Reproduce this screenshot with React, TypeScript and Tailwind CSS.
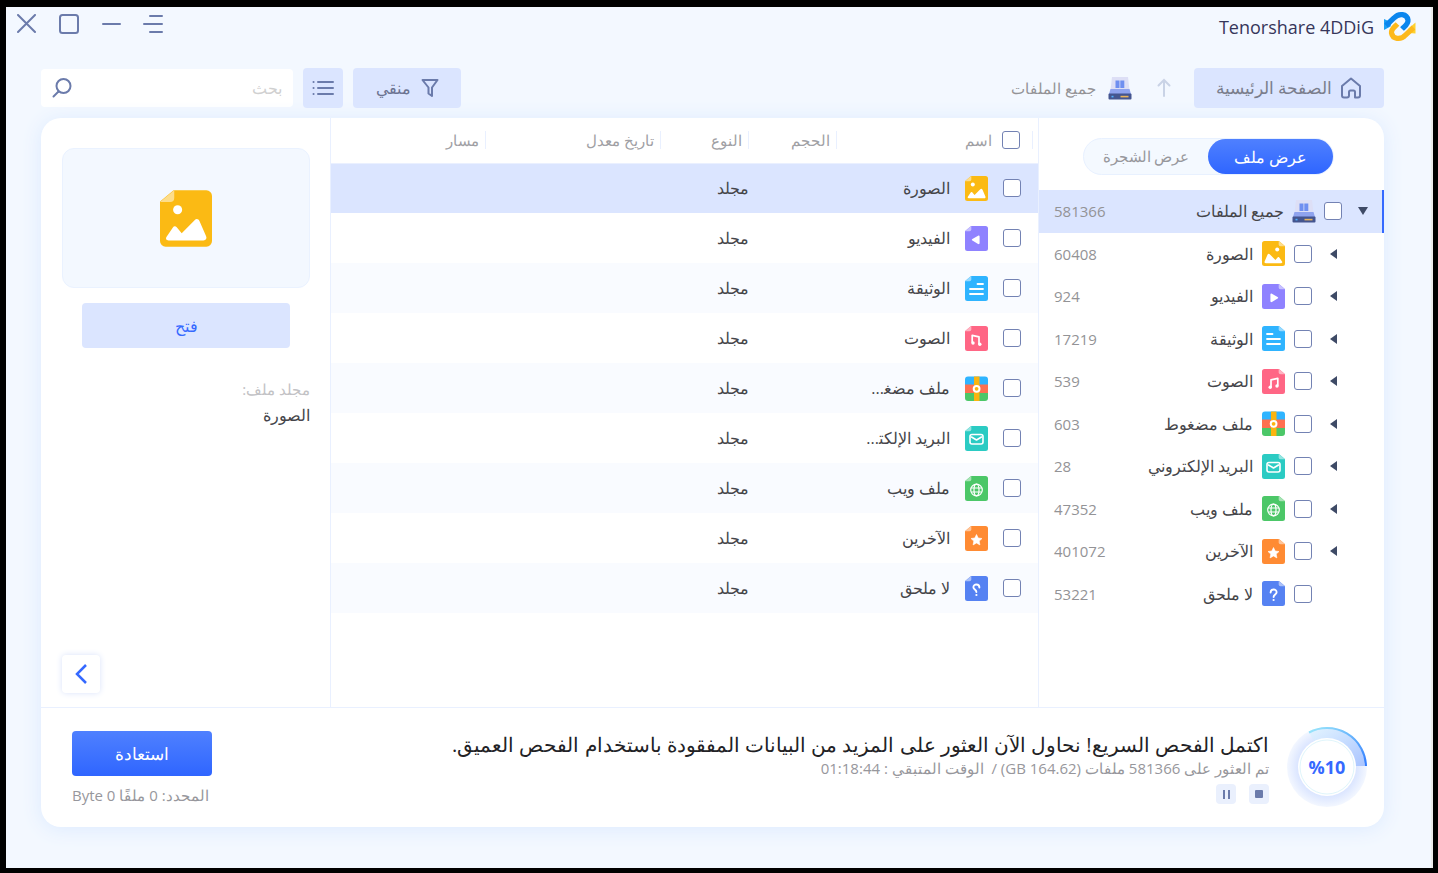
import { useState, type ReactNode } from "react";

type FileKind = "image" | "video" | "document" | "audio" | "archive" | "email" | "web" | "other" | "unknown";

type Category = {
    kind: FileKind;
    name: string;
    shortName: string;
    count: number;
    expandable: boolean;
};

const categories: Category[] = [
    { kind: "image", name: "الصورة", shortName: "الصورة", count: 60408, expandable: true },
    { kind: "video", name: "الفيديو", shortName: "الفيديو", count: 924, expandable: true },
    { kind: "document", name: "الوثيقة", shortName: "الوثيقة", count: 17219, expandable: true },
    { kind: "audio", name: "الصوت", shortName: "الصوت", count: 539, expandable: true },
    { kind: "archive", name: "ملف مضغوط", shortName: "ملف مضغ\u200d...", count: 603, expandable: true },
    { kind: "email", name: "البريد الإلكتروني", shortName: "البريد الإلكت\u200d...", count: 28, expandable: true },
    { kind: "web", name: "ملف ويب", shortName: "ملف ويب", count: 47352, expandable: true },
    { kind: "other", name: "الآخرين", shortName: "الآخرين", count: 401072, expandable: true },
    { kind: "unknown", name: "لا ملحق", shortName: "لا ملحق", count: 53221, expandable: false },
];

const columns = ["الحجم", "النوع", "تاريخ معدل", "مسار"];

const fileColors: Record<FileKind, string> = {
    image: "#fbba14",
    video: "#8f82ff",
    document: "#2fb4ff",
    audio: "#ff6685",
    archive: "#ff7050",
    email: "#2bcbc3",
    web: "#4cc768",
    other: "#ff8b33",
    unknown: "#5682f2",
};

const fileGlyphs: Record<FileKind, ReactNode> = {
    image: (
        <>
            <circle cx="15.2" cy="8.6" r="2" fill="#fff" />
            <path d="M3.8 22.2c-1.200 0-1.600-.9-1.200-1.800l2.900-6.700c.5-1.100 1.500-1.200 2.200-.4l5.700 5.700 2.200-2.600c.5-.6 1.300-.6 1.700.1l2.700 4c.7 1 .2 1.700-.8 1.700z" fill="#fff" />
        </>
    ),
    video: <path d="M8.4 10.6c0-1 .7-1.3 1.5-.9l5.700 3.300c.8.5.8 1.200 0 1.600l-5.700 3.400c-.8.400-1.500 0-1.500-.9z" fill="#fff" />,
    document: <path d="M5 8h5.500M5 13h13M5 18h13" stroke="#fff" strokeWidth="1.8" strokeLinecap="round" />,
    audio: (
        <>
            <path d="M9 18v-7.200l6.800-1.500v7.400" fill="none" stroke="#fff" strokeWidth="1.7" strokeLinejoin="round" />
            <circle cx="8.2" cy="18.2" r="1.7" fill="#fff" />
            <circle cx="15" cy="17" r="1.7" fill="#fff" />
        </>
    ),
    archive: null,
    email: (
        <>
            <rect x="5" y="8.5" width="13" height="9.5" rx="2" fill="none" stroke="#fff" strokeWidth="1.6" />
            <path d="M6.500 11l5 3 5-3" fill="none" stroke="#fff" strokeWidth="1.6" strokeLinecap="round" strokeLinejoin="round" />
        </>
    ),
    web: (
        <g fill="none" stroke="#fff" strokeWidth="1.2">
            <circle cx="11.5" cy="14" r="5.8" />
            <ellipse cx="11.5" cy="14" rx="2.5" ry="5.8" />
            <path d="M6.200 12h10.600M6.200 16h10.600" />
        </g>
    ),
    other: <path d="M11.500 8.500l1.700 3.500 3.800.5-2.800 2.600.7 3.800-3.400-1.900-3.400 1.900.7-3.800L6 12.500l3.800-.5z" fill="#fff" stroke="#fff" strokeWidth=".6" strokeLinejoin="round" />,
    unknown: (
        <>
            <path d="M8.600 11.500c0-4 6-4 6-.3 0 2.300-3 2.300-3 4.800" fill="none" stroke="#fff" strokeWidth="1.9" strokeLinecap="round" />
            <circle cx="11.6" cy="19" r="1.1" fill="#fff" />
        </>
    ),
};

// The page fold sits top right, flipped icons have it top left
const FileIcon = ({ kind, className }: { kind: FileKind; className: string }) => (
    <svg viewBox="0 0 23 25" className={className} aria-hidden="true">
        {kind === "archive" ? (
            <>
                <path d="M0 9V3.500A3 3 0 0 1 3 .5h17a3 3 0 0 1 3 3V9z" fill="#2fb4ff" />
                <path d="M0 8.500h23v8.500H0z" fill="#ff7050" />
                <path d="M0 17h23v5a3 3 0 0 1-3 3H3a3 3 0 0 1-3-3z" fill="#4cc768" />
                <path d="M9 .5h5.500V25H9z" fill="#fbb40f" />
                <circle cx="11.6" cy="12.8" r="2.9" fill="#fbb40f" stroke="#fff" strokeWidth="2" />
            </>
        ) : (
            <>
                <path d="M2.500 0H17l6 5v17.500a2.500 2.500 0 0 1-2.500 2.500h-18A2.500 2.500 0 0 1 0 22.500v-20A2.500 2.500 0 0 1 2.500 0z" fill={fileColors[kind]} />
                <path d="M16.700 0l6.300 5.200h-4.500a1.800 1.800 0 0 1-1.800-1.800z" fill="#fff" fillOpacity=".5" />
                {fileGlyphs[kind]}
            </>
        )}
    </svg>
);

const DriveIcon = () => (
    <svg viewBox="0 0 24 23" className="h-[23px] w-6 shrink-0" aria-hidden="true">
        <path d="M4 0h16l1.500 13h-19z" fill="#dddff6" />
        <path d="M7.500 3.500h4v7.500h-4zM12.300 3.500h4v7.500h-4z" fill="#6f8ff0" />
        <path d="M2.500 12h19l1.500 5H1z" fill="#8fa3ee" />
        <rect x="0.5" y="16.5" width="23" height="6" rx="1" fill="#44558f" />
        <path d="M3.500 19.600h2" stroke="#4fb0ff" strokeWidth="1.6" />
        <path d="M12.500 19.600h8" stroke="#e8b45c" strokeWidth="1.6" />
    </svg>
);

const Logo = () => (
    <svg viewBox="0 0 32 31" className="h-[31px] w-8" fill="none" strokeWidth="5.2" aria-hidden="true">
        <path d="M31.500 11.500v11l-6.500-.5-1-4z" fill="#ffd230" />
        <path d="M29.500 16.500l-8 7.500c-5 5.500-13 4-14-2-.5-4 3-6 6-9" stroke="#fdb91c" />
        <path d="M0 8v11l6.500-3.500 1-4z" fill="#1da1f5" />
        <path d="M2 14.500l8-7.500c5-5.500 13-4 14 2 .5 4-3 6-6 9" stroke="#0a86ee" />
    </svg>
);

const Checkbox = ({ id, label }: { id: string; label?: string }) => (
    <input
        id={id}
        type="checkbox"
        aria-label={label}
        className="h-[18px] w-[18px] shrink-0 appearance-none rounded-[3px] border border-[#7382b3] bg-white checked:bg-[#3569ff]"
    />
);

const TitleBar = () => (
    <header className="flex h-[37px] items-center justify-between pt-0.5 pr-[15px] pl-[11px] text-[#6b7bab]">
        <div className="flex items-center gap-2.5">
            <Logo />
            <span dir="ltr" className="text-lg text-[#36365a]">Tenorshare 4DDiG</span>
        </div>
        <div className="flex items-center gap-[22px] pb-1.5">
            <button aria-label="القائمة">
                <svg viewBox="0 0 20 20" className="h-5 w-5" stroke="currentColor" strokeWidth="2" strokeLinecap="round">
                    <path d="M7 2h12M1 10h18M7 18h12" />
                </svg>
            </button>
            <button aria-label="تصغير">
                <svg viewBox="0 0 20 20" className="h-5 w-5" stroke="currentColor" strokeWidth="2" strokeLinecap="round">
                    <path d="M2 10h17" />
                </svg>
            </button>
            <button aria-label="تكبير">
                <svg viewBox="0 0 20 20" className="h-5 w-5" fill="none" stroke="currentColor" strokeWidth="2">
                    <rect x="1" y="1" width="18" height="18" rx="2.5" />
                </svg>
            </button>
            <button aria-label="إغلاق">
                <svg viewBox="0 0 20 20" className="h-5 w-5" stroke="currentColor" strokeWidth="2" strokeLinecap="round">
                    <path d="M1 1l17 17M18 1L1 18" />
                </svg>
            </button>
        </div>
    </header>
);

const Toolbar = () => (
    <div className="flex h-10 items-center justify-between">
        <nav className="flex h-full items-center">
            <button className="flex h-full w-[190px] items-center justify-center gap-2 rounded bg-[#dbe5ff] text-[17px] text-[#7a7d8c]">
                <svg viewBox="0 0 22 22" className="h-[22px] w-[22px]" fill="none" stroke="#6b7bab" strokeWidth="2" strokeLinejoin="round" aria-hidden="true">
                    <path d="M2 9l9-7.500L20 9v9.500a2 2 0 0 1-2 2h-3V15a1.500 1.500 0 0 0-1.500-1.500h-3A1.500 1.500 0 0 0 9 15v3.500a2 2 0 0 1-2 2H4a2 2 0 0 1-2-2z" />
                </svg>
                الصفحة الرئيسية
            </button>
            <button aria-label="أعلى" className="mr-5 ml-[22px]">
                <svg viewBox="0 0 20 20" className="h-5 w-5" fill="none" stroke="#c9d3e6" strokeWidth="2" strokeLinecap="round" aria-hidden="true">
                    <path d="M10 18V2M4.500 7.500L10 2l5.500 5.500" />
                </svg>
            </button>
            <a href="#all" className="flex items-center gap-3 text-[15px] text-[#939396]">
                <DriveIcon />
                جميع الملفات
            </a>
        </nav>
        <div className="flex h-full items-center gap-2.5">
            <button className="flex h-full w-[108px] items-center justify-center gap-2.5 rounded bg-[#dbe5ff] text-[#6b7391]">
                <svg viewBox="0 0 18 20" className="h-5 w-[18px]" fill="none" stroke="#6b7bab" strokeWidth="2" strokeLinejoin="round" aria-hidden="true">
                    <path d="M1.500 2h15L11 9.500v8.500l-3.500-2.500v-6z" />
                </svg>
                منقي
            </button>
            <button aria-label="عرض القائمة" className="flex h-full w-10 items-center justify-center rounded bg-[#dbe5ff]">
                <svg viewBox="0 0 22 18" className="h-[18px] w-[22px]" stroke="#6b7bab" strokeWidth="2" strokeLinecap="round" aria-hidden="true">
                    <path d="M6 3h15M6 9h15M6 15h15M1.500 3h.1M1.500 9h.1M1.500 15h.1" />
                </svg>
            </button>
            <label className="flex h-[38px] w-[252px] items-center rounded bg-white px-[11px]">
                <input type="text" placeholder="بحث" aria-label="بحث" className="min-w-0 flex-1 bg-transparent outline-none placeholder:text-[#d0d0d0]" />
                <svg viewBox="0 0 20 20" className="h-5 w-5" fill="none" stroke="#6b7bab" strokeWidth="2" strokeLinecap="round" aria-hidden="true">
                    <circle cx="11.5" cy="8" r="7" />
                    <path d="M6.500 13.500L1.500 18.500" />
                </svg>
            </label>
        </div>
    </div>
);

const Tree = () => {
    const [view, setView] = useState<"file" | "tree">("file");
    const active = "bg-linear-to-b from-[#4f80ff] to-[#2f65ff] text-white";
    const idle = "text-[#97979c]";

    return (
        <aside className="w-[346px] shrink-0 border-l border-[#e9f0ff]">
            <div className="mt-5 mr-[50px] mb-[15px] flex h-[37px] w-[251px] items-center rounded-full border border-[#e8f1ff] bg-[#f4f9ff]">
                <button onClick={() => setView("file")} className={`h-full w-[125px] rounded-full ${view === "file" ? active : idle}`}>عرض ملف</button>
                <button onClick={() => setView("tree")} className={`h-full flex-1 rounded-full text-[15px] ${view === "tree" ? active : idle}`}>عرض الشجرة</button>
            </div>
            <ul className="grid h-[425px] auto-rows-fr">
                <li className="flex items-center border-r-2 border-[#3569ff] bg-[#dbe5ff] pr-3.5 pl-[15px]">
                    <button aria-label="طي" className="ml-4">
                        <svg viewBox="0 0 10 8" className="h-2 w-2.5" fill="#3e4a66"><path d="M0 0h10L5 8z" /></svg>
                    </button>
                    <Checkbox id="tree-all" />
                    <label htmlFor="tree-all" className="flex flex-1 items-center gap-2 pr-2 text-[#454549]">
                        <DriveIcon />
                        جميع الملفات
                    </label>
                    <span className="text-[15px] text-[#939396]">581366</span>
                </li>
                {categories.map((category) => (
                    <li key={category.kind} className="flex items-center pr-[43px] pl-[15px]">
                        <span className="flex w-[29px] items-center pr-1">
                            {category.expandable && (
                                <button aria-label="توسيع">
                                    <svg viewBox="0 0 7 10" className="h-2.5 w-[7px]" fill="#3e4a66"><path d="M7 0v10L0 5z" /></svg>
                                </button>
                            )}
                        </span>
                        <Checkbox id={`tree-${category.kind}`} />
                        <label htmlFor={`tree-${category.kind}`} className="mr-[9px] flex flex-1 items-center gap-[9px] text-[#454549]">
                            <FileIcon kind={category.kind} className="h-[25px] w-[23px] shrink-0" />
                            {category.name}
                        </label>
                        <span className="text-[15px] text-[#939396]">{category.count}</span>
                    </li>
                ))}
            </ul>
        </aside>
    );
};

const FileTable = () => (
    <section className="min-w-0 flex-1">
        <table className="w-full table-fixed text-right">
            <thead className="h-[45px] border-b border-[#eaf0ff] text-[15px] text-[#a0a0a4]">
                <tr>
                    <th className="w-[201px] pr-[5px] font-normal">
                        <div className="flex h-[18px] items-center gap-2.5 border-r border-[#e9f0ff] pr-3">
                            <Checkbox id="table-all" />
                            <label htmlFor="table-all">اسم</label>
                        </div>
                    </th>
                    {columns.map((column, index) => (
                        <th key={column} className={`font-normal ${index < 2 ? "w-[88px]" : index === 2 ? "w-[175px]" : ""}`}>
                            <div className="flex h-[18px] items-center border-r border-[#e9f0ff] pr-1.5">{column}</div>
                        </th>
                    ))}
                </tr>
            </thead>
            <tbody className="text-[#454549]">
                {categories.map((category, index) => (
                    <tr key={category.kind} className={`h-[50px] ${index === 0 ? "bg-[#dbe5ff]" : index % 2 === 0 ? "bg-[#f9fbff]" : "bg-white"}`}>
                        <td className="pr-[17px]">
                            <div className="flex items-center">
                                <Checkbox id={`table-${category.kind}`} />
                                <label htmlFor={`table-${category.kind}`} className="mr-[15px] flex items-center gap-[15px] whitespace-nowrap">
                                    <FileIcon kind={category.kind} className={`h-[25px] w-[23px] shrink-0 ${category.kind === "archive" ? "" : "-scale-x-100"}`} />
                                    {category.shortName}
                                </label>
                            </div>
                        </td>
                        <td></td>
                        <td>مجلد</td>
                        <td></td>
                        <td></td>
                    </tr>
                ))}
            </tbody>
        </table>
    </section>
);

const Preview = () => (
    <aside className="flex w-[290px] shrink-0 flex-col border-r border-[#e9f0ff] pt-[30px] pr-5 pb-3.5 pl-[21px]">
        <div className="flex h-[140px] items-center justify-center rounded-xl border border-[#eaf2ff] bg-[#f3f8ff]">
            <FileIcon kind="image" className="h-[57px] w-[52px] -scale-x-100" />
        </div>
        <button className="mx-5 mt-[15px] h-[45px] rounded bg-[#dbe5ff] text-[#3569ff]">فتح</button>
        <dl className="mt-7 leading-[26px]">
            <dt className="text-[15px] text-[#c2c2c5]">مجلد ملف:</dt>
            <dd className="text-[#454549]">الصورة</dd>
        </dl>
        <button aria-label="إخفاء" className="mt-auto mr-auto flex h-[38px] w-[38px] items-center justify-center rounded bg-white shadow-[0_0_6px_#d9e2fa]">
            <svg viewBox="0 0 12 20" className="h-5 w-3" fill="none" stroke="#3569ff" strokeWidth="2.5" aria-hidden="true">
                <path d="M11 1L2 10l9 9" />
            </svg>
        </button>
    </aside>
);

const ProgressRing = () => (
    <div className="relative h-20 w-20 shrink-0">
        <svg viewBox="0 0 80 80" className="h-20 w-20 overflow-visible" aria-hidden="true">
            <defs>
                <radialGradient id="halo">
                    <stop offset=".7" stopColor="#d9e4ff" />
                    <stop offset="1" stopColor="#f3f7ff" />
                </radialGradient>
                <linearGradient id="wedge" x1="0" y1="0" x2="1" y2="1">
                    <stop offset="0" stopColor="#e4f5ff" />
                    <stop offset="1" stopColor="#a9c4ff" />
                </linearGradient>
                <linearGradient id="arc" x1="0" y1="0" x2="1" y2="1">
                    <stop offset="0" stopColor="#9be8fb" />
                    <stop offset="1" stopColor="#2f7bff" />
                </linearGradient>
            </defs>
            <circle cx="40" cy="40" r="40" fill="url(#halo)" />
            <path d="M40 39L22 5A39 39 0 0 1 79 39z" fill="url(#wedge)" />
            <path d="M22 5.500A39 39 0 0 1 79 39" fill="none" stroke="url(#arc)" strokeWidth="2" />
            <circle cx="40" cy="40" r="29" fill="#fff" />
            <circle cx="40" cy="40" r="27" fill="none" stroke="#dff5fb" />
        </svg>
        <span dir="ltr" className="absolute inset-0 flex items-center justify-center text-lg font-bold text-[#3569ff]">%10</span>
    </div>
);

const StatusBar = () => (
    <footer className="flex h-[120px] justify-between border-t border-[#e9f0ff] pt-[19px] pr-[17px] pl-[31px]">
        <div className="flex gap-[18px]">
            <ProgressRing />
            <div className="pt-1.5">
                <p className="text-xl leading-6 text-[#222225]">اكتمل الفحص السريع! نحاول الآن العثور على المزيد من البيانات المفقودة باستخدام الفحص العميق.</p>
                <p className="text-[15px] leading-[22px] whitespace-pre text-[#97979c]">تم العثور على 581366 ملفات (<bdi dir="ltr">GB 164.62</bdi>) /  الوقت المتبقي : 01:18:44</p>
                <div className="mt-[5px] flex gap-[13px]">
                    <button aria-label="إيقاف" className="flex h-5 w-5 items-center justify-center rounded-sm bg-[#eaf0fd]">
                        <span className="h-2 w-2 rounded-[1px] bg-[#6b7bab]" />
                    </button>
                    <button aria-label="إيقاف مؤقت" className="flex h-5 w-5 items-center justify-center gap-[3px] rounded-sm bg-[#eaf0fd]">
                        <span className="h-[9px] w-0.5 bg-[#6b7bab]" />
                        <span className="h-[9px] w-0.5 bg-[#6b7bab]" />
                    </button>
                </div>
            </div>
        </div>
        <div className="pt-1">
            <button className="block h-[45px] w-[140px] rounded bg-linear-to-b from-[#4f80ff] to-[#2f65ff] text-[17px] text-white">استعادة</button>
            <p className="mt-[7px] text-left text-[15px] leading-6 whitespace-nowrap text-[#97979c]">المحدد: 0 ملفًا <bdi dir="ltr">Byte 0</bdi></p>
        </div>
    </footer>
);

const App = () => {
    return (
        <div dir="rtl" className="flex min-h-screen flex-col bg-black pt-[7px] pr-[5px] pb-[5px] pl-1.5 font-['Open_Sans','Noto_Sans',sans-serif] text-base">
            <div className="flex flex-1 flex-col border-r-2 border-[#ececec] bg-[#f3f8ff]">
                <TitleBar />
                <div className="flex flex-1 flex-col pt-6 pr-[47px] pb-[41px] pl-[35px]">
                    <Toolbar />
                    <main className="mt-2.5 flex flex-1 flex-col rounded-[20px] bg-white shadow-[0_2px_20px_#dceaff]">
                        <div className="flex flex-1">
                            <Tree />
                            <FileTable />
                            <Preview />
                        </div>
                        <StatusBar />
                    </main>
                </div>
            </div>
        </div>
    );
};

export default App;
